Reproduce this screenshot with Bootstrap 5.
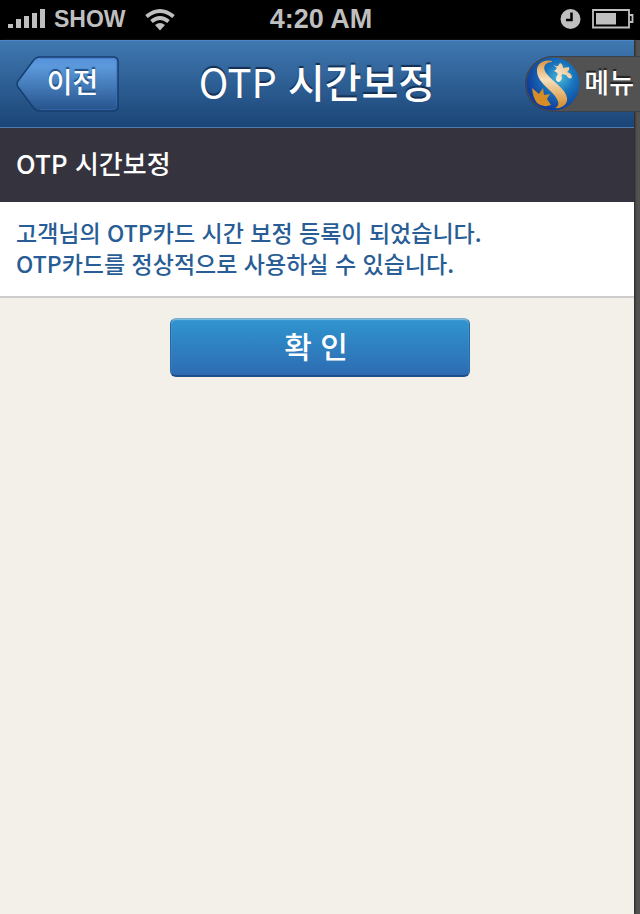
<!DOCTYPE html>
<html lang="ko">
<head>
<meta charset="utf-8">
<meta name="viewport" content="width=device-width, initial-scale=1">
<title>OTP 시간보정</title>
<link rel="stylesheet" href="https://cdn.jsdelivr.net/npm/bootstrap@5.3.0/dist/css/bootstrap.min.css">
<style>
body{background:#525252;font-family:"Noto Sans CJK KR",sans-serif;font-weight:500}
.status-bar{height:40px;background:#000;color:#bfbfbf;font-family:"Liberation Sans",sans-serif;font-weight:700;display:grid;grid-template-columns:1fr auto 1fr;padding:0 6px 2px 8px}
.carrier{font-size:23px;line-height:36px}
.clock{font-size:27px;line-height:36px}
.wifi{margin-left:18px}
.panel{background:#f3efe9;margin-right:6px;box-shadow:1px 0 2px #222}
.top-bar{height:88px;display:grid;grid-template-columns:1fr auto 1fr;background:linear-gradient(#3f78b0,#1b4577);border-top:1px solid #4f86c8;border-bottom:1px solid #4c7cb0;padding-bottom:1px}
.top-bar h1{font-size:40px;line-height:48px;font-weight:500;color:#fff;text-shadow:0 -2px 1px #132f51;padding-bottom:6px}
.latin{font-weight:400}
.back-btn{width:104px;height:56px;border:0;padding:0 0 5px 9px;background:none;color:#fff;font-size:28px;line-height:40px;font-weight:500;text-shadow:0 -2px 1px #1f4f86;isolation:isolate}
.back-btn svg{z-index:-1}
.menu-tab{height:56px;margin-right:-6px;background:#525252;border:1px solid #38424e;border-right:0;border-radius:28px 0 0 28px;padding:0 6px 0 0;color:#fff;font-size:27px;line-height:40px;font-weight:500;text-shadow:0 -2px 1px #222}
.menu-tab span{padding-bottom:3px}
.section-head{height:74px;background:#35343e;color:#fff;font-size:26px;line-height:40px;font-weight:500;padding:0 16px 4px}
.notice{color:#285d95;font-size:23px;line-height:31px;padding:15px 16px 17px;border-bottom:2px solid #cdcdcd}
.actions{padding:20px 0 20px 6px}
.ok-btn{width:300px;height:59px;border:1px solid #2768a6;border-top-color:#78add0;border-bottom:2px solid #1d4e8b;border-radius:6px;background:linear-gradient(#3095cf,#2d6bb2);box-shadow:inset 0 1px 1px #86bfe2;color:#fff;font-size:30px;line-height:40px;font-weight:500;padding:0 8px 5px 0}
</style>
<script src="https://cdn.jsdelivr.net/npm/bootstrap@5.3.0/dist/js/bootstrap.bundle.min.js"></script>
</head>
<body class="d-flex flex-column min-vh-100">
<div class="status-bar align-items-center">
  <div class="d-flex align-items-center">
    <svg class="me-2" width="38" height="20" viewBox="0 0 38 20" fill="#bfbfbf" aria-hidden="true"><path d="M0 15h5v4H0zM8 10h5v9H8zM16 7h5v12h-5zM24 4h5v15h-5zM32 0h5v19h-5z"/></svg>
    <span class="carrier">SHOW</span>
    <svg class="wifi" width="32" height="23" viewBox="0 0 32 23" aria-hidden="true"><g fill="none" stroke="#bfbfbf" stroke-width="4"><path d="M2.500 8.500Q16 -2.500 29.500 8.500"/><path d="M7.500 13.500Q16 6.500 24.500 13.500"/></g><path d="M11 17Q16 13 21 17L16 22.500Z" fill="#bfbfbf"/></svg>
  </div>
  <span class="clock">4:20 AM</span>
  <div class="d-flex align-items-center justify-content-end">
    <svg width="21" height="21" viewBox="0 0 21 21" aria-hidden="true"><circle cx="10.500" cy="10" r="10" fill="#bfbfbf"/><path d="M11.500 3.500v7.500H6" fill="none" stroke="#000" stroke-width="2.500"/></svg>
    <svg class="ms-2" width="45" height="21" viewBox="0 0 45 21" aria-hidden="true"><g transform="translate(3 0)"><path d="M1 1h36v17.500H1zM37 6h3.500v7H37" fill="none" stroke="#bfbfbf" stroke-width="1.800"/><path d="M4 4h20v11.500H4z" fill="#bfbfbf"/></g></svg>
  </div>
</div>
<main class="panel flex-grow-1">
  <header class="top-bar align-items-center">
    <button type="button" class="back-btn position-relative ms-3">
      <svg class="position-absolute top-0 start-0" width="104" height="56" viewBox="0 0 104 56" aria-hidden="true">
        <defs><linearGradient id="backFill" x1="0" y1="0" x2="0" y2="1"><stop offset="0" stop-color="#5590dc"/><stop offset=".18" stop-color="#5c99db"/><stop offset="1" stop-color="#25528a"/></linearGradient></defs>
        <path d="M24 1H97Q102 1 102 6V50Q102 55 97 55H24Q20 55 17 51L2 31Q0 28 2 25L17 5Q20 1 24 1Z" fill="url(#backFill)" stroke="#173e70" stroke-width="1.500"/>
        <path d="M24 2.500H96Q100.500 2.500 100.500 7V49Q100.500 53.500 96 53.500H24" fill="none" stroke="#3b70c0" stroke-opacity=".5"/>
      </svg>이전</button>
    <h1 class="m-0"><span class="latin">OTP</span> 시간보정</h1>
    <button type="button" class="menu-tab d-flex align-items-center ms-auto">
      <svg class="me-1" width="54" height="54" viewBox="0 0 54 54" aria-hidden="true">
        <defs><radialGradient id="globe" cx=".62" cy=".38" r=".62"><stop offset="0" stop-color="#48b9d9"/><stop offset=".45" stop-color="#1874bd"/><stop offset="1" stop-color="#103d9a"/></radialGradient>
        <linearGradient id="ribbon" x1="0" y1="0" x2="0" y2="1"><stop offset="0" stop-color="#dc963d"/><stop offset=".4" stop-color="#f6dfbd"/><stop offset="1" stop-color="#d58a26"/></linearGradient>
        <linearGradient id="leaf" x1="1" y1="0" x2="0" y2="1"><stop offset="0" stop-color="#e8b77c"/><stop offset="1" stop-color="#fff8ec"/></linearGradient></defs>
        <circle cx="27" cy="27" r="26.500" fill="url(#globe)"/>
        <path d="M26 4C18 2 12 6 11 12C10 24 22 30 29 39C34 46 33 49 29 51C36 52 42 47 41 41C40 32 27 25 20 16C16 10 19 5 26 5Z" fill="url(#ribbon)"/>
        <path d="M27 7.500Q30 10 32 9L34 6Q37 7 37 11L43 10Q44 13 41 15Q45 16 46 20Q44 24 40 18L36 17Q35 19 36 21Q35 25 32 25Q28 23 32 17Q31 15 28 14Q30 13 31 11Z" fill="url(#leaf)"/>
        <path d="M6 31L13 37L17 31L18 38L24 37L21 42L25 48Q17 51 11 46Q7 41 6 31Z" fill="#d78d27"/>
      </svg><span>메뉴</span></button>
  </header>
  <h2 class="section-head m-0 d-flex align-items-center">OTP 시간보정</h2>
  <p class="notice bg-white m-0">고객님의 OTP카드 시간 보정 등록이 되었습니다.<br>OTP카드를 정상적으로 사용하실 수 있습니다.</p>
  <div class="actions d-flex justify-content-center"><button type="button" class="ok-btn">확 인</button></div>
</main>
</body>
</html>
